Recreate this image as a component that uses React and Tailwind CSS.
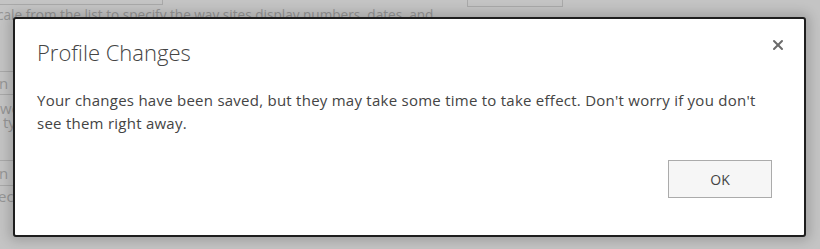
import { X } from 'lucide-react';

export default function App() {
  return (
    <div
      className="relative w-[820px] h-[249px] overflow-hidden bg-[#c4c4c4] text-[#969696]"
      style={{ fontFamily: '"Open Sans", "Noto Sans", sans-serif' }}
    >
      {/* Page behind the overlay */}
      <div className="flex items-start h-[7px]">
        <div className="w-[163px] h-[6px] border-b border-r border-[#a9a9a9] -mt-px" />
        <div className="ml-[304px] w-[96px] h-[7px] border border-t-0 border-[#a9a9a9]" />
      </div>
      <p className="-ml-[3px] mt-[-1px] text-[13.6px] leading-[18px] whitespace-nowrap">
        cale from the list to specify the way sites display numbers, dates, and
      </p>
      <div className="mt-[47px] w-[14px] border-t border-[#a9a9a9]" />
      <p className="text-[15px] leading-[22px] -ml-[1px]">n</p>
      <div className="w-[14px] border-t border-[#a9a9a9]" />
      <p className="text-[15px] leading-[14px] mt-[6px] whitespace-nowrap">we</p>
      <p className="text-[15px] leading-[14px] ml-[3px] whitespace-nowrap">ty</p>
      <div className="mt-[31px] w-[14px] border-t border-[#a9a9a9]" />
      <p className="text-[15px] leading-[24px] -ml-[1px]">n</p>
      <div className="w-[14px] border-t border-[#a9a9a9]" />
      <p className="text-[15px] leading-[20px] -ml-[2px] whitespace-nowrap">ec</p>

      {/* Dialog */}
      <div className="absolute left-[13px] top-[17px] w-[793px] h-[220px] bg-white border-2 border-[#1e1e1e] rounded-[3px] shadow-[0_0_12px_4px_rgba(0,0,0,0.18)] flex flex-col">
        <div className="flex items-start justify-between pl-[22px] pr-[18px] pt-[18px]">
          <h1 className="text-[22px] leading-[30px] font-light text-[#444444]">Profile Changes</h1>
          <button className="mt-0 text-[#6b6b6b]">
            <X className="w-[16px] h-[16px]" strokeWidth={3} />
          </button>
        </div>
        <p className="mt-[22px] pl-[22px] pr-[40px] text-[15px] leading-[23px] tracking-[0.25px] text-[#444444]">
          Your changes have been saved, but they may take some time to take effect. Don't worry if you don't see them right away.
        </p>
        <div className="flex justify-end pr-[32px] mt-auto mb-[37px]">
          <button className="w-[104px] h-[38px] bg-[#f6f6f6] border border-[#ababab] text-[14px] text-[#444444]">
            OK
          </button>
        </div>
      </div>
    </div>
  );
}
